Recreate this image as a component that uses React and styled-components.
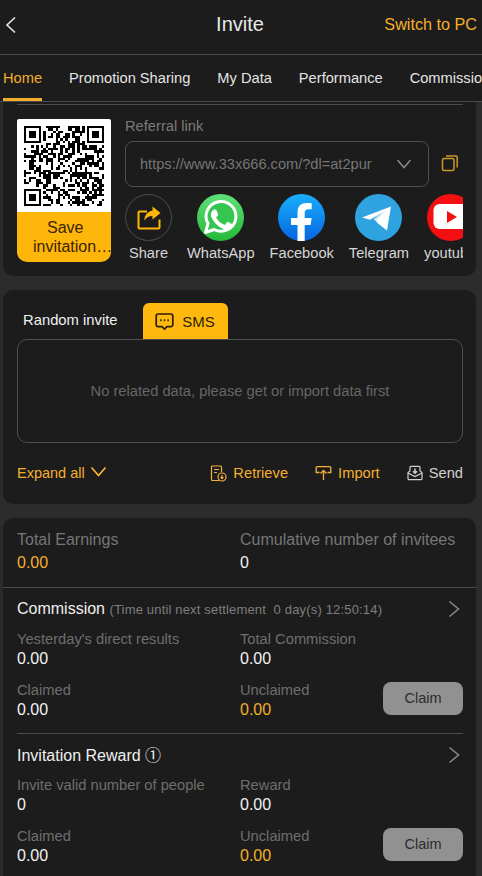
import styled, { createGlobalStyle } from 'styled-components';

const GlobalStyle = createGlobalStyle`
	html, body {
		margin: 0;
		padding: 0;
		background: #2c2c2c;
		font-family: "Liberation Sans", Arial, sans-serif;
	}
	* { box-sizing: border-box; }
`;

const QR_SIZE = 33;

// not a scannable code, just the same look
const buildQrPath = () => {
	let seed = 4711;
	const next = () => {
		seed = (seed * 16807) % 2147483647;
		return seed / 2147483647;
	};
	const inFinder = (x, y, ox, oy) => x >= ox - 1 && x <= ox + 7 && y >= oy - 1 && y <= oy + 7;
	const finderOn = (x, y, ox, oy) => {
		const dx = x - ox;
		const dy = y - oy;
		if (dx < 0 || dx > 6 || dy < 0 || dy > 6) return false;
		if (dx === 0 || dx === 6 || dy === 0 || dy === 6) return true;
		return dx >= 2 && dx <= 4 && dy >= 2 && dy <= 4;
	};
	const finders = [[0, 0], [QR_SIZE - 7, 0], [0, QR_SIZE - 7]];
	let d = '';
	for (let y = 0; y < QR_SIZE; y++) {
		for (let x = 0; x < QR_SIZE; x++) {
			const inside = finders.some(([ox, oy]) => inFinder(x, y, ox, oy));
			const on = inside ? finders.some(([ox, oy]) => finderOn(x, y, ox, oy)) : next() > 0.46;
			if (on) d += `M${x} ${y}h1v1h-1z`;
		}
	}
	return d;
};

const QrCode = () => (
	<QrSvg viewBox={`0 0 ${QR_SIZE} ${QR_SIZE}`} shapeRendering="crispEdges">
		<path d={buildQrPath()} fill="#000" />
	</QrSvg>
);

const BackIcon = () => (
	<svg width="12" height="18" viewBox="0 0 12 18" fill="none" stroke="#e6e6e6" strokeWidth="1.6">
		<path d="M10 1.5 2 9l8 7.5" />
	</svg>
);

const ChevronRight = () => (
	<svg width="12" height="18" viewBox="0 0 12 18" fill="none" stroke="#8c8c8c" strokeWidth="1.5">
		<path d="M1.5 1.5 10.5 9l-9 7.5" />
	</svg>
);

const ShareIcon = () => (
	<svg width="26" height="26" viewBox="0 0 26 26" fill="none">
		<path d="M11 6.5H3.5a1 1 0 0 0-1 1v15a1 1 0 0 0 1 1h19a1 1 0 0 0 1-1v-8" stroke="#ffb60a" strokeWidth="2" />
		<path d="M16.5 1.5 24.5 8l-8 6.5v-3.6c-3.6 0-6 1.2-8.2 4.6.3-5.2 3.2-9.2 8.2-9.7z" fill="#ffb60a" />
	</svg>
);

const CopyIcon = () => (
	<svg width="18" height="18" viewBox="0 0 18 18" fill="none" stroke="#c9992a" strokeWidth="1.5">
		<rect x="1.5" y="4.5" width="11.5" height="12" rx="1.5" />
		<path d="M5 2h10a1.2 1.2 0 0 1 1.2 1.2V13.5" />
	</svg>
);

const WhatsAppIcon = () => (
	<svg width="47" height="47" viewBox="0 0 47 47">
		<defs>
			<linearGradient id="wa" x1="0" y1="0" x2="0" y2="1">
				<stop offset="0" stopColor="#5fe077" />
				<stop offset="1" stopColor="#25b93a" />
			</linearGradient>
		</defs>
		<circle cx="23.5" cy="23.5" r="23.5" fill="url(#wa)" />
		<path d="M8.5 38.5 11 29.6a14.9 14.9 0 1 1 6 5.9z" fill="#36c550" stroke="#fff" strokeWidth="3" strokeLinejoin="round" />
		<path d="M18.6 14.6c-.5-1.1-1-1.1-1.5-1.1h-1.3c-.5 0-1.2.2-1.8.9-.6.7-2.3 2.2-2.3 5.4s2.4 6.3 2.7 6.7c.3.4 4.6 7.3 11.4 10 5.6 2.2 6.8 1.8 8 1.7 1.2-.1 4-1.6 4.5-3.2.6-1.6.6-2.9.4-3.2-.2-.3-.6-.5-1.3-.8l-4.6-2.3c-.6-.2-1.1-.3-1.5.4-.5.7-1.7 2.2-2.1 2.6-.4.5-.8.5-1.4.2-.7-.3-2.9-1.1-5.6-3.4-2-1.8-3.4-4-3.8-4.7-.4-.7 0-1 .3-1.4l1-1.2c.3-.4.4-.7.7-1.1.2-.5.1-.9-.1-1.2z" fill="#fff" transform="translate(4.3 4.5) scale(.82)" />
	</svg>
);

const FacebookIcon = () => (
	<svg width="47" height="47" viewBox="0 0 47 47">
		<defs>
			<linearGradient id="fb" x1="0" y1="0" x2="0" y2="1">
				<stop offset="0" stopColor="#19aefb" />
				<stop offset="1" stopColor="#0566e0" />
			</linearGradient>
		</defs>
		<circle cx="23.5" cy="23.5" r="23.5" fill="url(#fb)" />
		<path d="M19.5 47V31H13v-7h6.5v-5.6C19.5 12.2 23.1 9 28.7 9c2.7 0 5 .2 5 .2v6h-3.2c-3 0-3.8 1.8-3.8 3.6V24h7l-1.1 7h-5.9v16z" fill="#fff" />
	</svg>
);

const TelegramIcon = () => (
	<svg width="47" height="47" viewBox="0 0 47 47">
		<circle cx="23.5" cy="23.5" r="23.5" fill="#2fa3e0" />
		<path d="M7 23.5 36 12.5 32 36.5 23 29.5 19 25 28.5 18 15 25.8z" fill="#fff" />
		<path d="M19 25 28.5 18 22 26.5 23 29.5z" fill="#cfe6f4" />
	</svg>
);

const YoutubeIcon = () => (
	<svg width="47" height="47" viewBox="0 0 47 47">
		<circle cx="23.5" cy="23.5" r="23.5" fill="#f30f12" />
		<rect x="6.5" y="10" width="34" height="25" rx="6" fill="#fff" />
		<path d="M20 17 30 23 20 29z" fill="#f30f12" />
	</svg>
);

const SmsIcon = () => (
	<svg width="19" height="19" viewBox="0 0 19 19" fill="none" stroke="#2a1f00" strokeWidth="1.7">
		<path d="M3 2h13a1.8 1.8 0 0 1 1.8 1.8v9a1.8 1.8 0 0 1-1.8 1.8h-4L9.5 17 7 14.6H3a1.8 1.8 0 0 1-1.8-1.8v-9A1.8 1.8 0 0 1 3 2z" />
		<path d="M5.2 8.3h1.4M8.800 8.3h1.4M12.4 8.3h1.4" strokeWidth="2" />
	</svg>
);

const ExpandIcon = () => (
	<svg width="17" height="11" viewBox="0 0 17 11" fill="none" stroke="#ffb92e" strokeWidth="1.6">
		<path d="M1.5 1.5 8.5 9.5 15.5 1.5" />
	</svg>
);

const RetrieveIcon = () => (
	<svg width="17" height="17" viewBox="0 0 17 17" fill="none" stroke="#f3b13a" strokeWidth="1.2">
		<path d="M9 15.5H2.5a1 1 0 0 1-1-1V2a1 1 0 0 1 1-1h8a1 1 0 0 1 1 1v5" />
		<path d="M4 4.5h5M4 7.5h3" />
		<circle cx="12" cy="12" r="4" />
		<path d="M12 10v3.5M10.5 12.2 12 13.7l1.5-1.5" />
	</svg>
);

const ImportIcon = () => (
	<svg width="17" height="16" viewBox="0 0 17 16" fill="none" stroke="#f3b13a" strokeWidth="1.3">
		<path d="M4.5 7.5H1.2V2.8a1.2 1.2 0 0 1 1.2-1.2h12.200a1.2 1.2 0 0 1 1.2 1.2v4.7h-3.3" />
		<path d="M8.5 15V6M5.5 8.5l3-3 3 3" />
	</svg>
);

const SendIcon = () => (
	<svg width="16" height="16" viewBox="0 0 16 16" fill="none" stroke="#d0d0d0" strokeWidth="1.2">
		<path d="M1 7.5v6a1.2 1.2 0 0 0 1.2 1.2h11.600a1.2 1.2 0 0 0 1.2-1.2v-6L13 6V2.500a1.2 1.2 0 0 0-1.2-1.2H4.200A1.2 1.2 0 0 0 3 2.500V6z" />
		<path d="M1 8l7 3.5L15 8" />
		<path d="M8 3.5v4.5M6 6.2 8 8.2l2-2" strokeWidth="1.5" />
	</svg>
);

const socials = [
	{ name: 'WhatsApp', Icon: WhatsAppIcon },
	{ name: 'Facebook', Icon: FacebookIcon },
	{ name: 'Telegram', Icon: TelegramIcon },
	{ name: 'youtube', Icon: YoutubeIcon },
];

const tabs = ['Home', 'Promotion Sharing', 'My Data', 'Performance', 'Commission'];

const Stat = ({ label, value, accent }) => (
	<StatBox>
		<StatLabel>{label}</StatLabel>
		<StatValue $accent={accent}>{value}</StatValue>
	</StatBox>
);

const RewardBlock = ({ title, first, second }) => (
	<Block>
		<BlockHead>
			<BlockTitle>{title}</BlockTitle>
			<ChevronRight />
		</BlockHead>
		<StatGrid>
			<Stat label={first.label} value={first.value} />
			<Stat label={second.label} value={second.value} />
			<Stat label="Claimed" value="0.00" />
			<ClaimCell>
				<Stat label="Unclaimed" value="0.00" accent />
				<ClaimBtn>Claim</ClaimBtn>
			</ClaimCell>
		</StatGrid>
	</Block>
);

const App = () => {
	return (
		<Page>
			<GlobalStyle />
			<Header>
				<BackBtn><BackIcon /></BackBtn>
				<Title>Invite</Title>
				<SwitchLink>Switch to PC</SwitchLink>
			</Header>
			<TabBar>
				{tabs.map((tab, i) => (
					<TabItem key={tab} $active={i === 0}>{tab}</TabItem>
				))}
			</TabBar>

			<Card1>
				<TopRule />
				<ShareRow>
					<QrCard>
						<QrWrap><QrCode /></QrWrap>
						<SaveBtn>
							Save
							<SaveLine>invitation…</SaveLine>
						</SaveBtn>
					</QrCard>
					<ShareBody>
						<FieldLabel>Referral link</FieldLabel>
						<LinkRow>
							<LinkBox>
								<LinkText>https://www.33x666.com/?dl=at2pur</LinkText>
								<svg width="16" height="10" viewBox="0 0 16 10" fill="none" stroke="#8a8a8a" strokeWidth="1.5">
									<path d="M1.5 1 8 8.5 14.5 1" />
								</svg>
							</LinkBox>
							<CopyBtn><CopyIcon /></CopyBtn>
						</LinkRow>
						<SocialRow>
							<SocialItem>
								<ShareCircle><ShareIcon /></ShareCircle>
								<SocialName>Share</SocialName>
							</SocialItem>
							{socials.map(({ name, Icon }) => (
								<SocialItem key={name}>
									<Icon />
									<SocialName>{name}</SocialName>
								</SocialItem>
							))}
						</SocialRow>
					</ShareBody>
				</ShareRow>
			</Card1>

			<Card2>
				<InviteTabs>
					<PlainTab>Random invite</PlainTab>
					<SmsTab><SmsIcon />SMS</SmsTab>
				</InviteTabs>
				<EmptyBox>No related data, please get or import data first</EmptyBox>
				<ActionRow>
					<ExpandBtn>Expand all <ExpandIcon /></ExpandBtn>
					<Actions>
						<ActionBtn $accent><RetrieveIcon />Retrieve</ActionBtn>
						<ActionBtn $accent><ImportIcon />Import</ActionBtn>
						<ActionBtn><SendIcon />Send</ActionBtn>
					</Actions>
				</ActionRow>
			</Card2>

			<Card3>
				<Totals>
					<TotalBox>
						<TotalLabel>Total Earnings</TotalLabel>
						<TotalValue $accent>0.00</TotalValue>
					</TotalBox>
					<TotalBox>
						<TotalLabel>Cumulative number of invitees</TotalLabel>
						<TotalValue>0</TotalValue>
					</TotalBox>
				</Totals>
				<RewardBlock
					title={<>Commission <Hint>(Time until next settlement&nbsp;&nbsp;0 day(s) 12:50:14)</Hint></>}
					first={{ label: "Yesterday's direct results", value: '0.00' }}
					second={{ label: 'Total Commission', value: '0.00' }}
				/>
				<InnerRule />
				<RewardBlock
					title={<>Invitation Reward <NumberMark>①</NumberMark></>}
					first={{ label: 'Invite valid number of people', value: '0' }}
					second={{ label: 'Reward', value: '0.00' }}
				/>
			</Card3>
		</Page>
	);
};

export default App;

const Page = styled.div`
	width: 482px;
	height: 876px;
	overflow: hidden;
	background: #2c2c2c;
	color: #fff;
`;

const Header = styled.header`
	display: flex;
	align-items: center;
	justify-content: space-between;
	height: 55px;
	padding: 0 5px 5px;
	background: #1c1c1c;
	border-bottom: 1px solid #4a4a4a;
	position: relative;
`;

const BackBtn = styled.div`
	display: flex;
	width: 14px;
`;

const Title = styled.div`
	position: absolute;
	left: 0;
	right: 2px;
	top: 12px;
	text-align: center;
	font-size: 20px;
	line-height: 24px;
	color: #e8e8e8;
`;

const SwitchLink = styled.div`
	font-size: 16.2px;
	color: #f4ae2c;
`;

const TabBar = styled.nav`
	display: flex;
	gap: 27px;
	height: 47px;
	padding-left: 3px;
	background: #1c1c1c;
	border-bottom: 1px solid #4a4a4a;
	white-space: nowrap;
	overflow: hidden;
`;

const TabItem = styled.div`
	height: 46px;
	line-height: 46px;
	font-size: 14.65px;
	color: ${(p) => (p.$active ? '#f4ae2c' : '#e4e4e4')};
	flex-shrink: 0;
	box-shadow: ${(p) => (p.$active ? 'inset 0 -3px 0 #f4ae2c' : 'none')};
`;

const Card1 = styled.section`
	height: 174px;
	margin: 0 6px 0 3px;
	padding: 2px 13px 0 14px;
	background: #1c1c1c;
	border-radius: 0 0 10px 10px;
`;

const TopRule = styled.div`
	height: 1px;
	background: #4a4a4a;
`;

const ShareRow = styled.div`
	display: flex;
	gap: 14px;
	margin-top: 14px;
`;

const QrCard = styled.div`
	flex: 0 0 94px;
	display: flex;
	flex-direction: column;
	height: 143px;
	border-radius: 2px 2px 10px 10px;
	overflow: hidden;
`;

const QrWrap = styled.div`
	display: flex;
	align-items: center;
	justify-content: center;
	height: 93px;
	background: #fff;
`;

const QrSvg = styled.svg`
	width: 80px;
	height: 80px;
`;

const SaveBtn = styled.div`
	flex: 1;
	padding: 6px 0 0 16px;
	background: #ffb60a;
	color: #3a2400;
	font-size: 16px;
	line-height: 19px;
	text-align: left;
	text-indent: 14px;
`;

const SaveLine = styled.span`
	display: block;
	text-indent: 0;
	white-space: nowrap;
`;

const ShareBody = styled.div`
	flex: 1;
	min-width: 0;
	margin-top: -1px;
`;

const FieldLabel = styled.div`
	font-size: 14.7px;
	line-height: 16px;
	color: #7a7a7a;
`;

const LinkRow = styled.div`
	display: flex;
	align-items: center;
	gap: 12px;
	margin-top: 7px;
`;

const LinkBox = styled.div`
	flex: 0 0 304px;
	display: flex;
	align-items: center;
	justify-content: space-between;
	height: 46px;
	padding: 0 16px 0 14px;
	border: 1px solid #505050;
	border-radius: 8px;
`;

const LinkText = styled.span`
	font-size: 14.6px;
	color: #767676;
`;

const CopyBtn = styled.div`
	display: flex;
	margin-top: -3px;
`;

const SocialRow = styled.div`
	display: flex;
	gap: 15px;
	margin-top: 7px;
	width: 338px;
	overflow: hidden;
`;

const SocialItem = styled.div`
	display: flex;
	flex-direction: column;
	align-items: center;
	flex-shrink: 0;
	min-width: 47px;
`;

const ShareCircle = styled.div`
	display: flex;
	align-items: center;
	justify-content: center;
	width: 47px;
	height: 47px;
	border: 1px solid #4e4e4e;
	border-radius: 50%;
`;

const SocialName = styled.span`
	margin-top: 4px;
	font-size: 14.65px;
	line-height: 17px;
	color: #d6d6d6;
`;

const Card2 = styled.section`
	height: 214px;
	margin: 14px 6px 0 3px;
	padding: 13px 13px 0 14px;
	background: #1c1c1c;
	border-radius: 10px;
`;

const InviteTabs = styled.div`
	display: flex;
	align-items: flex-end;
	height: 36px;
	padding-left: 6px;
	gap: 25px;
`;

const PlainTab = styled.div`
	align-self: flex-start;
	padding-top: 9px;
	font-size: 14.8px;
	line-height: 17px;
	color: #f0f0f0;
`;

const SmsTab = styled.div`
	display: flex;
	align-items: center;
	justify-content: center;
	gap: 8px;
	width: 85px;
	height: 36px;
	background: #ffb90e;
	border-radius: 6px 6px 0 0;
	color: #2a1f00;
	font-size: 15px;
`;

const EmptyBox = styled.div`
	display: flex;
	align-items: center;
	justify-content: center;
	height: 104px;
	border: 1px solid #505050;
	border-radius: 10px;
	font-size: 14.7px;
	color: #666;
`;

const ActionRow = styled.div`
	display: flex;
	align-items: center;
	justify-content: space-between;
	margin-top: 20px;
	height: 20px;
`;

const ExpandBtn = styled.div`
	display: flex;
	align-items: center;
	gap: 5px;
	font-size: 14.5px;
	color: #f4ae2c;

	svg {
		margin-top: -3px;
	}
`;

const Actions = styled.div`
	display: flex;
	gap: 27px;
`;

const ActionBtn = styled.div`
	display: flex;
	align-items: center;
	gap: 6px;
	font-size: 14.7px;
	color: ${(p) => (p.$accent ? '#f4ae2c' : '#d0d0d0')};
`;

const Card3 = styled.section`
	min-height: 400px;
	margin: 14px 6px 0 3px;
	background: #1c1c1c;
	border-radius: 10px 10px 0 0;
`;

const Totals = styled.div`
	display: grid;
	grid-template-columns: 223px 1fr;
	height: 70px;
	padding: 13px 13px 0 14px;
	border-bottom: 1px solid #4a4a4a;
`;

const TotalBox = styled.div``;

const TotalLabel = styled.div`
	font-size: 16px;
	line-height: 18px;
	color: #767676;
	white-space: nowrap;
`;

const TotalValue = styled.div`
	margin-top: 5px;
	font-size: 16px;
	line-height: 18px;
	color: ${(p) => (p.$accent ? '#f4ae2c' : '#f2f2f2')};
`;

const Block = styled.div`
	padding: 0 13px 0 14px;
`;

const BlockHead = styled.div`
	display: flex;
	align-items: center;
	justify-content: space-between;
	height: 43px;
	padding: 0 3px 1px 0;
`;

const BlockTitle = styled.div`
	font-size: 16px;
	color: #f0f0f0;
	white-space: nowrap;
`;

const Hint = styled.span`
	font-size: 13px;
	color: #7e7e7e;
	letter-spacing: 0.17px;
`;

const NumberMark = styled.span`
	font-family: "Noto Sans CJK SC", sans-serif;
	font-size: 16px;
	line-height: 18px;
`;

const StatGrid = styled.div`
	display: grid;
	grid-template-columns: 223px 1fr;
	row-gap: 14px;
`;

const StatBox = styled.div``;

const StatLabel = styled.div`
	font-size: 14.7px;
	line-height: 16px;
	color: #6e6e6e;
	white-space: nowrap;
`;

const StatValue = styled.div`
	margin-top: 3px;
	font-size: 16px;
	line-height: 18px;
	color: ${(p) => (p.$accent ? '#f4ae2c' : '#f2f2f2')};
`;

const ClaimCell = styled.div`
	display: flex;
	align-items: center;
	justify-content: space-between;
`;

const ClaimBtn = styled.div`
	display: flex;
	align-items: center;
	justify-content: center;
	width: 80px;
	height: 33px;
	margin-top: -4px;
	padding-bottom: 2px;
	border-radius: 8px;
	background: #919191;
	color: #2c2c2c;
	font-size: 14.5px;
`;

const InnerRule = styled.div`
	height: 1px;
	margin: 14px 13px 0 14px;
	background: #4a4a4a;
`;
